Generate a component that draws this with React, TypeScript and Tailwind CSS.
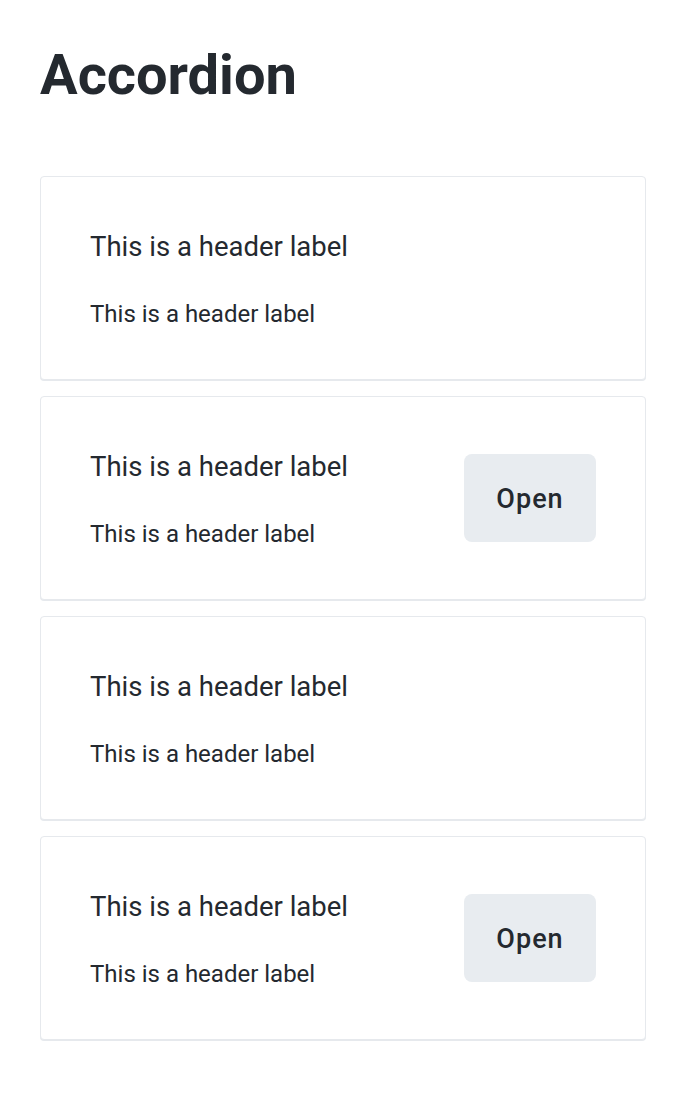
const items = [
  { title: "This is a header label", subtitle: "This is a header label", action: false },
  { title: "This is a header label", subtitle: "This is a header label", action: true },
  { title: "This is a header label", subtitle: "This is a header label", action: false },
  { title: "This is a header label", subtitle: "This is a header label", action: true },
];

function AccordionItem({ title, subtitle, action }: { title: string; subtitle: string; action: boolean }) {
  return (
    <div className="flex h-[204px] items-center justify-between rounded border border-[#e6e9ed] bg-white px-[49px] shadow-[0_1px_0_#e6e9ed]">
      <div className="flex flex-col gap-[37px] pt-[2px]">
        <span className="text-[27.5px] leading-[32px] text-[#24292f]">{title}</span>
        <span className="text-[24px] leading-[28px] text-[#24292f]">{subtitle}</span>
      </div>
      {action && (
        <button className="h-[88px] w-[132px] rounded-lg bg-[#e8ecf0] pt-[2px] text-[27px] font-medium tracking-[1px] text-[#24292f]">
          Open
        </button>
      )}
    </div>
  );
}

export default function App() {
  return (
    <div className="min-h-screen bg-white px-10 pt-10 font-['Roboto',sans-serif]">
      <h1 className="text-[56px] font-bold leading-[70px] text-[#24292f]">Accordion</h1>
      <div className="mt-[66px] flex flex-col gap-4">
        {items.map((item, i) => (
          <AccordionItem key={i} {...item} />
        ))}
      </div>
    </div>
  );
}
